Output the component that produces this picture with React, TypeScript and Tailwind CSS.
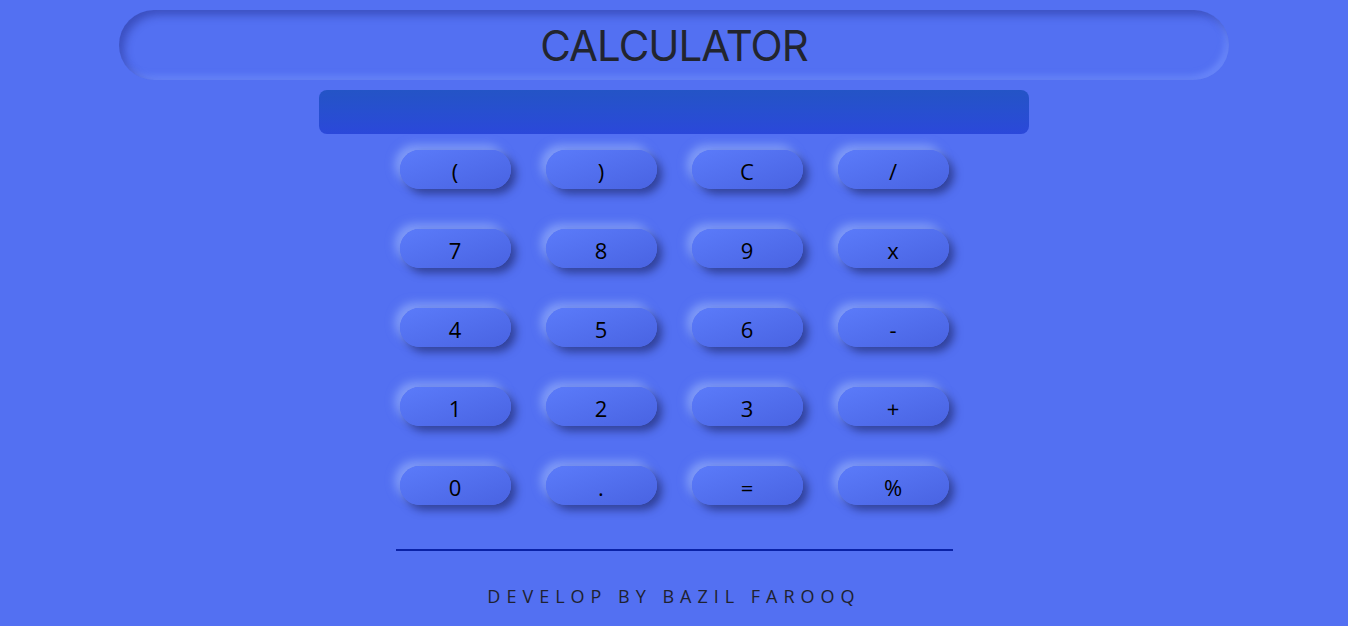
import React from 'react'

const keys = ['(', ')', 'C', '/', '7', '8', '9', 'x', '4', '5', '6', '-', '1', '2', '3', '+', '0', '.', '=', '%']

function Key({ label }: { label: string }) {
  return (
    <button className="w-[111px] h-[39px] pt-[3px] rounded-full bg-gradient-to-br from-[#5b7bfa] to-[#4963e2] shadow-[5px_5px_8px_rgba(20,25,80,0.55),-5px_-5px_10px_rgba(170,195,255,0.55)] text-black text-[22px] font-normal leading-none font-['Open_Sans',sans-serif] flex items-center justify-center">
      {label}
    </button>
  )
}

export default function App() {
  return (
    <div className="min-h-[626px] w-full bg-[#5370f2] flex flex-col items-center pt-[10px]">
      {/* Title */}
      <div className="w-[1110px] h-[70px] rounded-full bg-[#5370f2] shadow-[inset_5px_5px_8px_rgba(30,40,130,0.45),inset_-4px_-4px_6px_rgba(120,150,255,0.6)] flex items-center justify-center">
        <h1 className="text-[42px] font-normal tracking-[-1px] text-[#22252f] font-['Inter',sans-serif] leading-none pt-[2px]">
          CALCULATOR
        </h1>
      </div>

      {/* Display */}
      <div className="mt-[10px] w-[710px] h-[44px] rounded-[8px] bg-gradient-to-b from-[#2454c6] to-[#2b48da]" />

      {/* Keypad */}
      <div className="mt-[16px] grid grid-cols-4 gap-x-[35px] gap-y-[40px]">
        {keys.map((k) => (
          <Key key={k} label={k} />
        ))}
      </div>

      {/* Divider */}
      <div className="mt-[44px] w-[557px] h-[2px] bg-[#0b22a6]" />

      <p className="mt-[36px] text-[18px] tracking-[6px] text-[#1f2230] font-['Open_Sans',sans-serif] leading-none">
        DEVELOP BY BAZIL FAROOQ
      </p>
    </div>
  )
}
